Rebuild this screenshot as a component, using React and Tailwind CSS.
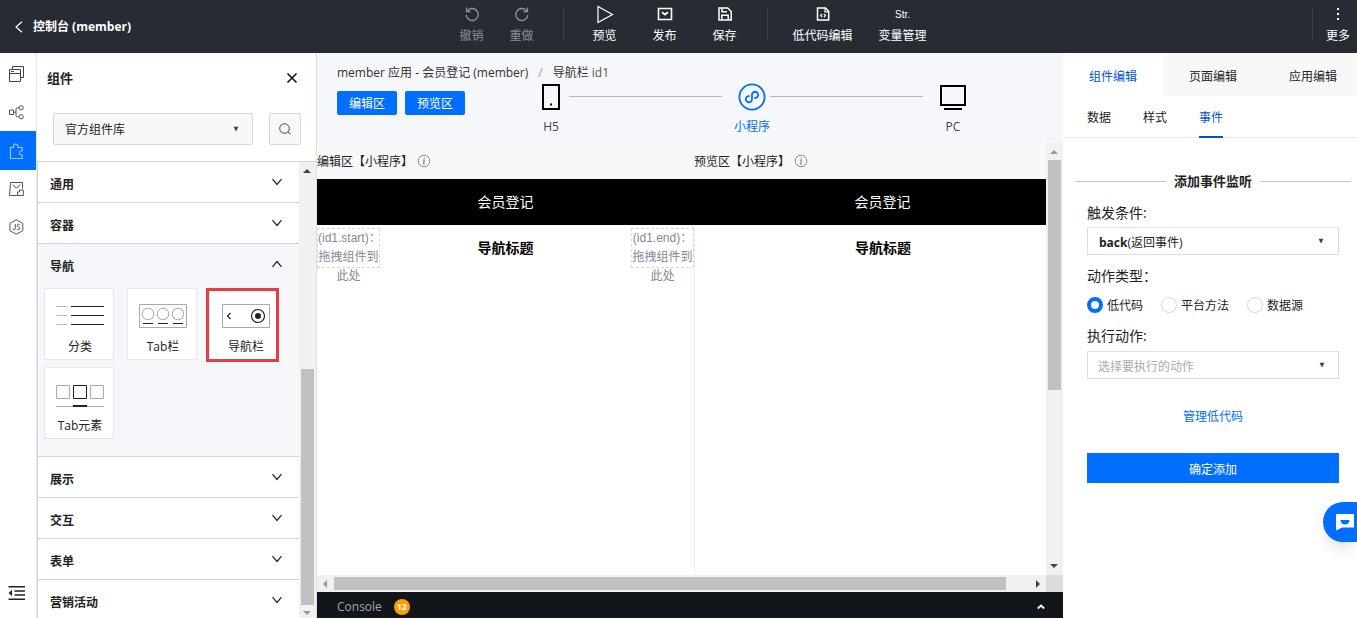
import React, { useState } from 'react';

const Undo = ({ flip }) => (
  <svg className={flip ? 'h-4 w-4 -scale-x-100' : 'h-4 w-4'} viewBox="0 0 16 16" fill="none" stroke="currentColor" strokeWidth="1.4">
    <path d="M3.2 5.2A6 6 0 1 1 2.2 9" />
    <path d="M2.6 1.6v4h4" />
  </svg>
);

const Play = () => (
  <svg className="h-4 w-4 overflow-visible" viewBox="0 0 16 16" fill="none" stroke="currentColor" strokeWidth="1.2">
    <path d="M1 .5v16L15.5 8.5z" />
  </svg>
);

const Publish = () => (
  <svg className="h-4 w-4" viewBox="0 0 16 16" fill="none" stroke="currentColor" strokeWidth="1.6">
    <path d="M1.500 2.500h13v11h-13z" />
    <path d="M5 6.200 8 8.600l3-2.400" strokeWidth="1.900" />
  </svg>
);

const Save = () => (
  <svg className="h-4 w-4" viewBox="0 0 16 16" fill="none" stroke="currentColor" strokeWidth="1.5">
    <path d="M2 2h8.700l3.500 3.500v8.500H2z" />
    <path d="M5 2.500v3.300h5M4.800 13.500V9.200h6.400v4.300" />
  </svg>
);

const CodeFile = () => (
  <svg className="h-4 w-4" viewBox="0 0 16 16" fill="none" stroke="currentColor" strokeWidth="1.5">
    <path d="M2.500 2h8l3.200 3.200v8.800H2.500z" />
    <path d="M10 2.400v3.400h3.400" strokeWidth="1.2" />
    <path d="M7.200 8 5.700 9.600l1.500 1.600M9 8l1.500 1.600L9 11.200" strokeWidth="1.2" />
  </svg>
);

const Dots = () => (
  <svg className="h-4 w-4" viewBox="0 0 16 16" fill="currentColor">
    <path d="M7 2h2v2H7zM7 7h2v2H7zM7 12h2v2H7z" />
  </svg>
);

const Chevron = ({ up }) => (
  <svg className={up ? 'h-3 w-3 rotate-180' : 'h-3 w-3'} viewBox="0 0 12 12" fill="none" stroke="#222" strokeWidth="1.2">
    <path d="m1.500 3.200 4.500 5.300 4.500-5.300" />
  </svg>
);

const Caret = () => (
  <svg className="pointer-events-none absolute right-[14px] top-1/2 h-[6px] w-[6px] -translate-y-1/2" viewBox="0 0 6 6" fill="#444">
    <path d="M.5 .8h5L3 5.500z" />
  </svg>
);

const Info = () => (
  <svg className="h-[14px] w-[14px]" viewBox="0 0 14 14" fill="none" stroke="#8a929c">
    <circle cx="7" cy="7" r="5.800" />
    <path d="M5.800 6h1.500l-.8 4h1.600M7.400 3.300l-.2 1.300" strokeWidth="1.2" />
  </svg>
);

const PagesIcon = () => (
  <svg className="h-4 w-4" viewBox="0 0 16 16" fill="none" stroke="#444">
    <path d="M1.500 3.500h11v12h-11zM1.500 7.500h11M3 5.500h3M4.500 3.500v-3h11v11h-3" />
  </svg>
);

const FlowIcon = () => (
  <svg className="h-4 w-4" viewBox="0 0 16 16" fill="none" stroke="#555">
    <path d="M1.500 6h4v4.500h-4zM5.500 8.200H8M11 3.800H9.200Q8 3.800 8 5v6.500q0 1.200 1.200 1.200H11" />
    <circle cx="13.200" cy="3.800" r="2.100" />
    <circle cx="13.200" cy="12.700" r="2.100" />
  </svg>
);

const PuzzleIcon = () => (
  <svg className="h-4 w-4" viewBox="0 0 16 16" fill="none" stroke="#9cc8ff" strokeWidth="1.1">
    <path d="M2.500 4.500h3a2.400 2.400 0 1 1 4.400 0h4.300v3.300a2.200 2.200 0 1 0 0 4.200v3.500H2.500z" />
  </svg>
);

const AssetIcon = () => (
  <svg className="h-4 w-4" viewBox="0 0 16 16" fill="none" stroke="#555">
    <path d="M14.500 7.500v-6h-12l-1 13h7.500M5 3.500Q8.500 10 12 3.500M9.500 14.500V11h2V9h3.800v5.500z" />
  </svg>
);

const JsIcon = () => (
  <svg className="h-4 w-4" viewBox="0 0 16 16" fill="none" stroke="#555">
    <path d="M8.300 .8 14.800 4.300v7.400L8.300 15.200 1.900 11.700V4.300z" />
    <path d="M7.300 5v4.500q0 1.200-1.200 1.200T4.800 9.800M11.800 6Q11.300 5.200 10.300 5.300T9.200 6.500q0 1 1.300 1.300t1.400 1.400q0 1.400-1.400 1.500T9 9.800" />
  </svg>
);

const CollapseIcon = () => (
  <svg className="h-4 w-[17px]" viewBox="0 0 17 16" fill="none" stroke="#222" strokeWidth="1.5">
    <path d="M.5 1.800H17M6.500 6H17M6.500 10H17M.5 14.200H17" />
    <path d="M4 5v6L.5 8z" fill="#222" stroke="none" />
  </svg>
);

const ListArt = () => (
  <svg className="h-6 w-12" viewBox="0 0 48 24" fill="none">
    <path d="M0 2.500h11M0 11.500h11M0 20.500h11" stroke="#bbb" />
    <path d="M15 2.500h33M15 11.500h33M15 20.500h33" stroke="#222" />
  </svg>
);

const TabArt = () => (
  <svg className="h-6 w-12" viewBox="0 0 48 24" fill="none" stroke="#aaa">
    <path d="M.5.5h47v23H.5z" />
    <circle cx="9" cy="10" r="5.800" />
    <circle cx="24" cy="10" r="5.800" />
    <circle cx="39" cy="10" r="5.800" />
    <path d="M4 19.500h10M19 19.500h10M34 19.500h10" stroke="#222" />
  </svg>
);

const NavArt = () => (
  <svg className="h-6 w-12" viewBox="0 0 48 24" fill="none" stroke="#222">
    <path d="M.5.5h47v23H.5z" stroke="#aaa" />
    <path d="M8.500 9 5.500 12l3 3" strokeWidth="1.2" />
    <circle cx="36" cy="12" r="6.500" strokeWidth="1.2" />
    <circle cx="36" cy="12" r="3" fill="#222" stroke="none" />
  </svg>
);

const TabItemArt = () => (
  <svg className="h-6 w-12" viewBox="0 0 48 24" fill="none" stroke="#aaa">
    <path d="M.5 2.500h13v13H.5zM34.500 2.500h13v13h-13zM0 23.500h48" />
    <path d="M17.500 2.500h13v13h-13z" stroke="#222" />
    <path d="M17 23h14" stroke="#222" strokeWidth="2" />
  </svg>
);

const Arrow = ({ dir, muted }) => {
  const paths = { up: 'M0 6h8L4 2z', down: 'M0 2h8L4 6z', left: 'M6 0v8L2 4z', right: 'M2 0v8l4-4z' };
  return (
    <svg className="h-2 w-2 shrink-0" viewBox="0 0 8 8" fill={muted ? '#999' : '#444'}>
      <path d={paths[dir]} />
    </svg>
  );
};

const rail = [
  { label: '页面', Icon: PagesIcon },
  { label: '流程', Icon: FlowIcon },
  { label: '组件', Icon: PuzzleIcon, active: true },
  { label: '素材', Icon: AssetIcon },
  { label: '脚本', Icon: JsIcon },
];

const navItems = [
  { label: '分类', Art: ListArt },
  { label: 'Tab栏', Art: TabArt },
  { label: '导航栏', Art: NavArt, marked: true },
  { label: 'Tab元素', Art: TabItemArt },
];

const groups = ['通用', '容器', '导航', '展示', '交互', '表单', '营销活动'];

const ToolButton = ({ label, width, disabled, children }) => (
  <button
    type="button"
    disabled={disabled}
    className={`flex shrink-0 flex-col items-center gap-[5px] pt-[6px] leading-[18px] ${width} ${disabled ? 'text-[#8b8f94]' : 'text-white'}`}
  >
    {children}
    <span className="whitespace-nowrap">{label}</span>
  </button>
);

const Header = () => (
  <header className="flex h-[53px] shrink-0 bg-[#272c34] text-white">
    <div className="flex flex-1 items-center pl-[15px]">
      <a href="#console" className="flex items-center gap-[10px] font-bold">
        <svg className="h-3 w-2" viewBox="0 0 8 12" fill="none" stroke="currentColor" strokeWidth="1.2">
          <path d="M7 .8 1 6l6 5.200" />
        </svg>
        控制台 (member)
      </a>
    </div>
    <nav className="flex pl-[17px]">
      <ToolButton label="撤销" width="w-[50px]" disabled><Undo /></ToolButton>
      <ToolButton label="重做" width="w-[50px]" disabled><Undo flip /></ToolButton>
      <span className="ml-4 mr-[11px] mt-2 h-8 w-px bg-[#3d424a]" />
      <ToolButton label="预览" width="w-[60px]"><Play /></ToolButton>
      <ToolButton label="发布" width="w-[60px]"><Publish /></ToolButton>
      <ToolButton label="保存" width="w-[60px]"><Save /></ToolButton>
      <span className="ml-3 mr-[15px] mt-2 h-8 w-px bg-[#3d424a]" />
      <ToolButton label="低代码编辑" width="w-[80px]"><CodeFile /></ToolButton>
      <ToolButton label="变量管理" width="w-[80px]">
        <span className="h-4 font-['Liberation_Sans',sans-serif] text-[10px]">Str.</span>
      </ToolButton>
    </nav>
    <div className="flex flex-1 justify-end">
      <span className="mt-2 h-8 w-px bg-[#3d424a]" />
      <ToolButton label="更多" width="w-[44px] pl-[6px]"><Dots /></ToolButton>
    </div>
  </header>
);

const Rail = () => (
  <nav className="flex w-[37px] shrink-0 flex-col border-r border-[#e5e8ed] pt-0.5">
    {rail.map(({ label, Icon, active }) => (
      <button
        key={label}
        type="button"
        aria-label={label}
        className={`flex w-9 items-center pl-2 ${active ? 'h-[39px] bg-[#006eff]' : 'h-[38px]'}`}
      >
        <Icon />
      </button>
    ))}
    <button type="button" aria-label="收起" className="mb-[17px] mt-auto pl-2">
      <CollapseIcon />
    </button>
  </nav>
);

const ComponentPanel = () => {
  const [open, setOpen] = useState('导航');
  return (
    <aside className="flex w-[280px] shrink-0 flex-col border-r border-[#e0e0e0]">
      <div className="flex h-[50px] shrink-0 items-center justify-between pl-[10px] pr-[18px]">
        <h2 className="pt-0.5 text-[13px] font-bold">组件</h2>
        <button type="button" aria-label="关闭">
          <svg className="h-3 w-3" viewBox="0 0 12 12" stroke="#111" strokeWidth="1.6">
            <path d="m1.500 1.500 9 9M10.500 1.500l-9 9" />
          </svg>
        </button>
      </div>
      <div className="flex shrink-0 justify-between pb-4 pl-4 pr-[15px] pt-[10px]">
        <div className="relative w-[200px]">
          <select aria-label="组件库" className="h-8 w-full appearance-none rounded-xs border border-[#d6d9de] bg-[#f8f8f8] px-[11px] pt-0.5">
            <option>官方组件库</option>
          </select>
          <Caret />
        </div>
        <button type="button" aria-label="搜索" className="flex h-8 w-8 items-center justify-center rounded-xs border border-[#d6d9de] bg-[#f8f8f8]">
          <svg className="h-3 w-3" viewBox="0 0 12 12" fill="none" stroke="#444">
            <circle cx="5.500" cy="5.500" r="4.800" />
            <path d="m9 9 2.500 2.500" />
          </svg>
        </button>
      </div>
      <div className="flex min-h-0 flex-1 border-l border-t border-[#d5d5d5]">
        <div className="flex-1 overflow-hidden">
          {groups.map((name) => (
            <section key={name} className={`border-b border-[#d5d5d5] ${open === name ? 'bg-[#f5f7fa]' : ''}`}>
              <button
                type="button"
                onClick={() => setOpen(open === name ? '' : name)}
                className="flex h-10 w-full items-center justify-between pl-3 pr-4 font-bold"
              >
                <span className="pt-[6px]">{name}</span>
                <Chevron up={open === name} />
              </button>
              {open === name && name === '导航' && (
                <div className="flex flex-wrap gap-x-[13px] gap-y-[7px] pb-[17px] pl-[6px] pt-1">
                  {navItems.map(({ label, Art, marked }) => (
                    <button
                      key={label}
                      type="button"
                      className={`relative flex h-[72px] w-[70px] flex-col items-center gap-[11px] border bg-white pl-0.5 pt-[15px] leading-4 ${marked ? 'border-transparent' : 'border-[#e5e8ed]'}`}
                    >
                      <Art />
                      {label}
                      {marked && <span className="absolute -left-[5px] -top-px h-[74px] w-[73px] border-3 border-[#e83d43]" />}
                    </button>
                  ))}
                </div>
              )}
            </section>
          ))}
        </div>
        <div className="flex w-[17px] shrink-0 flex-col items-center justify-between bg-[#f1f1f1] pb-px pr-px pt-[5px]">
          <Arrow dir="up" />
          <span className="mb-1 mt-auto h-[236px] w-[13px] bg-[#c1c1c1]" />
          <Arrow dir="down" muted />
        </div>
      </div>
    </aside>
  );
};

const Slot = ({ name }) => (
  <div className="h-10 w-[63px] border border-dashed border-[#d3d9e0] text-center font-['Liberation_Sans','Noto_Sans_CJK_SC',sans-serif] leading-[19px] text-[#7d8b9c]">
    ({name})：<br />拖拽组件到<br />此处
  </div>
);

const Phone = ({ title, slots }) => (
  <div className="flex w-[377px] shrink-0 flex-col">
    <div className="flex h-9 items-center gap-1 bg-[#f8f8f8]">
      <span className="pt-0.5">{title}【小程序】</span>
      <Info />
    </div>
    <div className="flex h-[46px] items-center justify-center bg-black text-sm text-white">会员登记</div>
    <div className={`flex flex-1 items-start pt-[3px] ${slots ? 'justify-between' : 'justify-center border-l border-[#ececec]'}`}>
      {slots && <Slot name="id1.start" />}
      <h3 className="text-sm font-bold leading-10 text-black">导航标题</h3>
      {slots && <Slot name="id1.end" />}
    </div>
  </div>
);

const Workspace = () => (
  <main className="flex min-w-0 flex-1 flex-col">
    <div className="h-[90px] shrink-0 bg-[#f5f7fa] pl-5 pt-[10px]">
      <p className="h-5 leading-5 text-[#333]">
        member 应用 - 会员登记 (member)
        <span className="mx-[10px] text-[#999]">/</span>
        导航栏 <span className="text-[#555]">id1</span>
      </p>
      <div className="flex pr-[97px]">
        <div className="mt-2 flex shrink-0 gap-2">
          <button type="button" className="h-6 w-[60px] rounded-xs bg-[#006eff] pt-0.5 text-white">编辑区</button>
          <button type="button" className="h-6 w-[60px] rounded-xs bg-[#006eff] pt-0.5 text-white">预览区</button>
        </div>
        <div className="ml-[76px] flex flex-1 leading-4 text-[#444]">
          <button type="button" className="flex w-5 flex-col items-center gap-2">
            <svg className="h-7 w-5" viewBox="0 0 20 28" fill="none" stroke="#000" strokeWidth="2">
              <path d="M2 2h16v24H2z" />
              <path d="M9 21.500h2" />
            </svg>
            H5
          </button>
          <span className="ml-2 mr-3 mt-[13px] h-px flex-1 bg-[#b5b8bc]" />
          <button type="button" className="flex w-9 flex-col items-center gap-2 text-[#006eff]">
            <svg className="h-7 w-7" viewBox="0 0 28 28" fill="none" stroke="currentColor" strokeWidth="1.8">
              <circle cx="14" cy="14" r="12.600" />
              <path d="M11.800 13.200a3.100 3.100 0 1 0 2.200 3v-4.400a3.100 3.100 0 1 1 2.200 3" />
            </svg>
            小程序
          </button>
          <span className="mr-[17px] mt-[13px] h-px flex-1 bg-[#b5b8bc]" />
          <button type="button" className="flex w-[26px] flex-col items-center gap-2">
            <svg className="h-7 w-[26px]" viewBox="0 0 26 28" fill="none" stroke="#000" strokeWidth="2">
              <path d="M1 3h24v19H1zM4 26h18" />
            </svg>
            PC
          </button>
        </div>
      </div>
    </div>
    <div className="flex min-h-0 flex-1">
      <div className="flex min-w-0 flex-1 overflow-hidden">
        <Phone title="编辑区" slots />
        <Phone title="预览区" />
      </div>
      <div className="flex w-[17px] shrink-0 flex-col items-center bg-[#f1f1f1] pb-[5px] pr-px pt-[5px]">
        <Arrow dir="up" muted />
        <span className="mt-1 h-[230px] w-[13px] bg-[#c1c1c1]" />
        <span className="mt-auto flex"><Arrow dir="down" /></span>
      </div>
    </div>
    <div className="flex h-[17px] shrink-0 bg-[#f1f1f1]">
      <div className="flex flex-1 items-center justify-between pl-1 pr-1">
        <Arrow dir="left" muted />
        <span className="ml-[5px] mr-7 h-[13px] flex-1 bg-[#c1c1c1]" />
        <Arrow dir="right" />
      </div>
      <span className="w-[17px] bg-[#dcdcdc]" />
    </div>
    <div className="flex h-[26px] shrink-0 items-center bg-[#12161a] pl-5 pr-[18px] pt-1">
      <span className="font-medium text-[#a3a6a9]">Console</span>
      <span className="ml-3 flex h-4 w-4 items-center justify-center rounded-full bg-[#ff9d00] text-[9px] font-bold text-white">12</span>
      <button type="button" aria-label="展开" className="ml-auto">
        <svg className="h-2 w-2" viewBox="0 0 8 8" fill="none" stroke="#fff" strokeWidth="1.8">
          <path d="m.8 5.500 3.200-3 3.200 3" />
        </svg>
      </button>
    </div>
  </main>
);

const actionTypes = ['低代码', '平台方法', '数据源'];

const EventPanel = () => {
  const [type, setType] = useState('低代码');
  return (
    <aside className="flex w-[294px] shrink-0 flex-col overflow-hidden">
      <div className="flex h-[43px] shrink-0 bg-[#f8f8f9]">
        <button type="button" className="w-[100px] shrink-0 bg-white pt-1 text-[#0052d9]">组件编辑</button>
        <button type="button" className="w-[100px] shrink-0 pt-1">页面编辑</button>
        <button type="button" className="w-[100px] shrink-0 pt-1">应用编辑</button>
      </div>
      <div className="flex h-[42px] shrink-0 gap-8 border-b border-[#ebebeb] pl-6">
        <button type="button" className="pt-0.5">数据</button>
        <button type="button" className="pt-0.5">样式</button>
        <button type="button" className="-mb-px border-b-2 border-[#0052d9] pt-1 text-[#0052d9]">事件</button>
      </div>
      <div className="mt-[33px] flex items-center gap-2 pl-3 pr-[6px]">
        <span className="h-px flex-1 bg-[#c4c7cb]" />
        <h2 className="text-[13px] font-bold leading-5">添加事件监听</h2>
        <span className="h-px flex-1 bg-[#c4c7cb]" />
      </div>
      <form className="flex flex-col pl-6 pr-[18px] pt-[10px]" onSubmit={(e) => e.preventDefault()}>
        <label htmlFor="trigger" className="h-[26px] text-sm leading-6">触发条件:</label>
        <div className="relative flex h-7 items-center border border-[#dcdfe3] pl-[11px]">
          <b className="pt-1">back</b>
          <select id="trigger" className="h-full flex-1 appearance-none pt-1">
            <option>(返回事件)</option>
          </select>
          <Caret />
        </div>
        <fieldset className="pt-[9px]">
          <legend className="float-left w-full text-sm leading-6">动作类型：</legend>
          <div className="clear-both flex gap-[18px] pt-[6px]">
            {actionTypes.map((t) => (
              <label key={t} className="flex items-center gap-1 whitespace-nowrap leading-5">
                <input
                  type="radio"
                  name="action-type"
                  checked={type === t}
                  onChange={() => setType(t)}
                  className="h-4 w-4 appearance-none rounded-full border border-[#d5d8dc] bg-white checked:border-4 checked:border-[#006eff]"
                />
                <span className="pt-0.5">{t}</span>
              </label>
            ))}
          </div>
        </fieldset>
        <label htmlFor="action" className="mt-2 h-[27px] text-sm leading-6">执行动作:</label>
        <div className="relative">
          <select id="action" className="block h-7 w-full appearance-none border border-[#dcdfe3] px-[10px] pt-1 text-[#aaa]">
            <option>选择要执行的动作</option>
          </select>
          <Caret />
        </div>
        <a href="#lowcode" className="mx-auto mt-7 leading-5 text-[#006eff]">管理低代码</a>
        <button type="submit" className="mt-[26px] h-[30px] bg-[#006eff] pt-1 text-white">确定添加</button>
      </form>
    </aside>
  );
};

const App = () => (
  <div className="relative flex h-screen flex-col overflow-hidden bg-white font-['Open_Sans','Noto_Sans_CJK_SC',sans-serif] text-xs text-[#222]">
    <Header />
    <div className="flex min-h-0 flex-1">
      <Rail />
      <ComponentPanel />
      <Workspace />
      <EventPanel />
    </div>
    <button
      type="button"
      aria-label="客服"
      className="absolute bottom-[76px] right-0 flex h-10 w-[34px] items-center rounded-l-full bg-[#006eff] pl-[13px] shadow-lg"
    >
      <svg className="h-[18px] w-[18px] shrink-0" viewBox="0 0 18 18" fill="#fff">
        <path d="M0 1h18v13.500H6L0 17.500z" />
        <path d="M4.500 7h9a4.500 4.500 0 0 1-9 0z" fill="#006eff" />
      </svg>
    </button>
  </div>
);

export default App;
